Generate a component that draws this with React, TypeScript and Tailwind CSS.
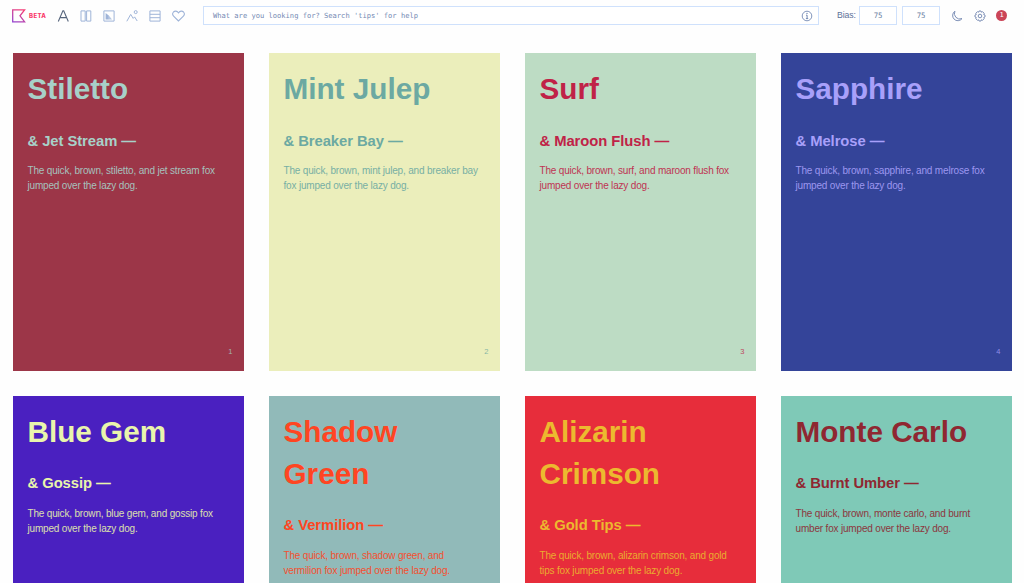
interface Pairing {
  name: string
  partner: string
  background: string
  color: string
}

const pairings: Pairing[] = [
  { name: "Stiletto", partner: "Jet Stream", background: "#9c3648", color: "#a7d1c9" },
  { name: "Mint Julep", partner: "Breaker Bay", background: "#ebeebb", color: "#6ca9a2" },
  { name: "Surf", partner: "Maroon Flush", background: "#bddcc4", color: "#c02247" },
  { name: "Sapphire", partner: "Melrose", background: "#344499", color: "#a8a0fa" },
  { name: "Blue Gem", partner: "Gossip", background: "#4a20c0", color: "#e9f5ac" },
  { name: "Shadow Green", partner: "Vermilion", background: "#91bab9", color: "#ff4522" },
  { name: "Alizarin Crimson", partner: "Gold Tips", background: "#e72d3b", color: "#ecb92f" },
  { name: "Monte Carlo", partner: "Burnt Umber", background: "#7fc9b7", color: "#8f2731" },
]

function Logo() {
  return (
    <svg className="h-[14px] w-[14px] shrink-0" viewBox="0 0 14 14" fill="none">
      <defs>
        <linearGradient id="logo" x1="0" y1="14" x2="8" y2="0" gradientUnits="userSpaceOnUse">
          <stop stopColor="#8a45d8" />
          <stop offset="1" stopColor="#f43f78" />
        </linearGradient>
      </defs>
      <path d="M.7.8H12.6L8 6.8l4.6 6.1H.7Z" stroke="url(#logo)" strokeWidth="1.3" />
    </svg>
  )
}

function ViewIcons() {
  return (
    <div className="flex shrink-0 items-center gap-[11px] text-[#9fb4d8]">
      <svg className="h-3 w-3 text-[#56657c]" viewBox="0 0 12 12" fill="none" stroke="currentColor" strokeWidth="1.1">
        <path d="M1.3 11.5 5.9.9h.8l4.6 10.6M3.1 7.6h6.4" />
      </svg>
      <svg className="h-3 w-3" viewBox="0 0 12 12" fill="none" stroke="currentColor">
        <path d="M1 .9h4.2v10.2H1ZM6.6.9h4.2v10.2H6.6Z" />
      </svg>
      <svg className="h-3 w-3" viewBox="0 0 12 12" fill="none" stroke="currentColor">
        <path d="M.9.9h10.2v10.2H.9Z" />
        <path d="M2.6 3v6.4h3.2V5.6Z" fill="currentColor" stroke="none" />
        <path d="M5.8 5.6v3.8H9Z" fill="currentColor" stroke="none" opacity=".75" />
      </svg>
      <svg className="h-3 w-3" viewBox="0 0 12 12" fill="none" stroke="currentColor">
        <path d="m.8 11.3 3.9-6.9 2.5 4 1.4-1.5 2.6 4.1" />
        <circle cx="9.7" cy="2.1" r="1.5" />
      </svg>
      <svg className="h-3 w-3" viewBox="0 0 12 12" fill="none" stroke="currentColor">
        <path d="M.9.9h10.2v10.2H.9ZM.9 4.3h10.2M.9 7.7h10.2" />
      </svg>
      <svg className="h-3 w-[13px]" viewBox="0 0 13 12" fill="none" stroke="currentColor" strokeWidth="1.1">
        <path d="M6.5 11 1.6 6.1A3 3 0 0 1 1.5 2a2.9 2.9 0 0 1 4.2 0l.8.9.8-.9a2.9 2.9 0 0 1 4.2 0 3 3 0 0 1-.1 4.1Z" />
      </svg>
    </div>
  )
}

function InfoIcon() {
  return (
    <svg className="h-3 w-3" viewBox="0 0 12 12" fill="none" stroke="currentColor">
      <circle cx="6" cy="6" r="4.8" strokeWidth=".9" />
      <path d="M5 5.2h1.1v3.2M4.9 8.6h2.3" />
      <circle cx="6" cy="3.4" r=".7" fill="currentColor" stroke="none" />
    </svg>
  )
}

function MoonIcon() {
  return (
    <svg className="h-3 w-3" viewBox="0 0 12 12" fill="none" stroke="currentColor" strokeLinejoin="round">
      <path d="M3.9 1.2A5.2 5.2 0 1 0 11 8.6 5.5 5.5 0 0 1 3.9 1.2Z" strokeWidth=".9" />
    </svg>
  )
}

function GearIcon() {
  return (
    <svg className="h-3 w-3" viewBox="0 0 12 12" fill="none" stroke="currentColor" strokeLinejoin="round">
      <path
        d="M5 1h2l.4 1.2 1.2-.5 1.6 1.6-.5 1.2L11 5v2l-1.3.5.5 1.2-1.6 1.6-1.2-.5L7 11H5l-.4-1.2-1.2.5-1.6-1.6.5-1.2L1 7V5l1.3-.5-.5-1.2 1.6-1.6 1.2.5Z"
        strokeWidth=".9"
      />
      <circle cx="6" cy="6" r="1.8" strokeWidth=".9" />
    </svg>
  )
}

function BiasInput() {
  return (
    <div className="flex h-[19px] w-[38px] items-center justify-center border border-[#cfe1fc] bg-white font-['DejaVu_Sans_Mono',monospace] text-[7.4px] tracking-[-0.2px] text-[#6b7fa3]">
      75
    </div>
  )
}

function Header() {
  return (
    <header className="flex h-[31px] items-center pl-3">
      <Logo />
      <span className="ml-[3px] mr-[10px] w-[18px] shrink-0 font-['Inter','Liberation_Sans',sans-serif] text-[6px] font-extrabold tracking-[0.4px] text-[#f93a6a]">
        BETA
      </span>
      <ViewIcons />
      <div className="ml-[18px] flex h-[19px] w-[616px] shrink-0 items-center justify-between border border-[#cfe1fc] bg-white pl-[9px] pr-[5px] text-[#7389b3]">
        <span className="pt-px font-['DejaVu_Sans_Mono',monospace] text-[7.1px]">What are you looking for? Search 'tips' for help</span>
        <InfoIcon />
      </div>
      <span className="ml-[18px] mr-[3px] w-[19px] shrink-0 whitespace-nowrap text-[8.7px] tracking-[-0.1px] text-[#5d7199]">Bias:</span>
      <div className="flex gap-[5px]">
        <BiasInput />
        <BiasInput />
      </div>
      <div className="ml-[11px] flex items-center gap-[11px] text-[#7085af]">
        <MoonIcon />
        <GearIcon />
        <span className="-ml-px flex h-[11px] w-[11px] items-center justify-center rounded-full bg-[#cb4558] font-['DejaVu_Sans_Mono',monospace] text-[7px] text-white">
          1
        </span>
      </div>
    </header>
  )
}

function PairingCard({ pairing, index }: { pairing: Pairing; index: number }) {
  const { name, partner, background, color } = pairing
  return (
    <article
      className="flex h-[317.5px] flex-col px-[15px] pb-[12.5px] pt-[15px]"
      style={{ background, color }}
    >
      <h2 className="text-[29.7px] font-bold leading-[42px]">{name}</h2>
      <h3 className="mt-[20.5px] text-[14.8px] font-bold leading-[21px] tracking-[-0.06px]">& {partner} —</h3>
      <p className="mt-[11.5px] text-[10px] leading-[15px] tracking-[-0.18px] opacity-90">
        The quick, brown, {name.toLowerCase()}, and {partner.toLowerCase()} fox jumped over the lazy dog.
      </p>
      <span className="-mr-[4px] mt-auto self-end text-[7.5px] leading-[13px] opacity-80">{index}</span>
    </article>
  )
}

export default function App() {
  return (
    <div className="h-[583px] w-[1024px] overflow-hidden bg-[#fefefe] font-['Liberation_Sans',Arial,sans-serif]">
      <Header />
      <main className="grid grid-cols-[repeat(4,231px)] gap-x-[25px] gap-y-[24.9px] pl-[12.5px] pt-[22.3px]">
        {pairings.map((pairing, i) => (
          <PairingCard key={pairing.name} pairing={pairing} index={i + 1} />
        ))}
      </main>
    </div>
  )
}
